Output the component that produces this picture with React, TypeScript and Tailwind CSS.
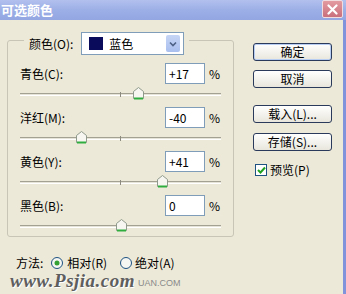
import React from "react";

const FONT = { fontFamily: '"Noto Sans CJK SC", "Noto Sans", sans-serif' };

const sliders = [
  { label: "青色(C):", value: 17 },
  { label: "洋红(M):", value: -40 },
  { label: "黄色(Y):", value: 41 },
  { label: "黑色(B):", value: 0 },
];

function Thumb() {
  return (
    <svg width="11" height="13" viewBox="0 0 11 13">
      <path d="M0.5 4.5 L5.5 0.5 L10.5 4.5 L10.5 11.5 L0.5 11.5 Z" fill="#f7f6f0" stroke="#8f9a8c" />
      <path d="M1 11.5 H10" stroke="#2fae3f" strokeWidth="2" />
    </svg>
  );
}

function SliderBlock({ label, value }: { label: string; value: number }) {
  const sign = value > 0 ? "+" + value : String(value);
  return (
    <div className="flex flex-col h-[44px]">
      <div className="flex items-center h-[21px]">
        <span className="flex-1 text-[12px] text-black">{label}</span>
        <div className="w-[40px] h-[21px] border border-[#7f9db9] bg-white flex items-center pl-[3px] text-[12px] text-black">
          {value === 0 ? "0" : sign}
        </div>
        <span className="ml-[4px] w-[12px] text-[12px] text-black">%</span>
      </div>
      <div className="relative h-[23px]">
        <div className="absolute left-0 right-0 top-[9px] h-[3px] border-t border-[#a3a192] border-b border-b-white bg-[#e6e4d8]" />
        <div className="absolute left-[100px] top-[8px] w-px h-[5px] bg-[#8d8b80]" />
        <div className="absolute top-[3px]" style={{ left: 96 + value }}>
          <Thumb />
        </div>
      </div>
    </div>
  );
}

function XpButton({ children, primary }: { children: React.ReactNode; primary?: boolean }) {
  return (
    <div
      className={
        "w-[79px] h-[18px] rounded-[3px] border border-[#2a3a5a] bg-gradient-to-b from-white to-[#e8e6dc] flex items-center justify-center text-[12px] text-black " +
        (primary ? "shadow-[inset_0_0_0_1px_#b8cdf2]" : "")
      }
    >
      {children}
    </div>
  );
}

function Radio({ on }: { on?: boolean }) {
  return (
    <svg width="12" height="12" viewBox="0 0 12 12">
      <circle cx="6" cy="6" r="5.5" fill="#f6f6f2" stroke="#1d5281" />
      {on && <circle cx="6" cy="6" r="2.5" fill="#33a133" />}
    </svg>
  );
}

export default function App() {
  return (
    <div className="w-[346px] h-[294px] bg-[#ece9d8] flex flex-col overflow-hidden" style={FONT}>
      <div className="h-[20px] flex justify-between bg-gradient-to-b from-[#b2c0ee] via-[#9cafe6] to-[#93a6e2]">
        <span className="pl-[1px] pt-[1px] text-[13px] font-bold text-white leading-[18px]">可选颜色</span>
        <div className="w-[21px] h-[18px] mr-[3px] rounded-[2px] border border-[#f1dde0] bg-gradient-to-b from-[#e39aa0] to-[#c9707c] flex items-center justify-center">
          <svg width="11" height="11" viewBox="0 0 11 11">
            <path d="M1.5 1.5 L9.5 9.5 M9.5 1.5 L1.5 9.5" stroke="white" strokeWidth="2.2" strokeLinecap="round" />
          </svg>
        </div>
      </div>

      <div className="flex-1 flex border-r-[3px] border-[#8193da] relative">
        <div className="w-[234px] pl-[7px] pt-[20px] flex flex-col">
          <div className="w-[227px] h-[197px] border border-[#c8c5b6] rounded-[3px] px-[12px] flex flex-col">
            <div className="-mt-[9px] ml-[4px] self-start px-[5px] bg-[#ece9d8] flex items-center">
              <span className="text-[12px] text-black">颜色(O):</span>
              <div className="ml-[8px] w-[103px] h-[23px] border border-[#7f9db9] bg-white flex items-center pl-[7px] pr-[3px]">
                <div className="w-[14px] h-[13px] bg-[#0b0b5c]" />
                <span className="ml-[6px] flex-1 text-[12px] text-black">蓝色</span>
                <div className="w-[14px] h-[17px] rounded-[2px] bg-gradient-to-b from-[#c6d5f5] to-[#a9bfee] flex items-center justify-center">
                  <svg width="8" height="6" viewBox="0 0 8 6">
                    <path d="M1 1.5 L4 4.5 L7 1.5" fill="none" stroke="#4d6185" strokeWidth="1.6" />
                  </svg>
                </div>
              </div>
            </div>
            <div className="mt-[8px] flex flex-col">
              {sliders.map((s) => (
                <SliderBlock key={s.label} label={s.label} value={s.value} />
              ))}
            </div>
          </div>

          <div className="mt-[19px] ml-[9px] flex items-center h-[14px] text-[12px] leading-[14px] text-black">
            <span>方法:</span>
            <span className="ml-[8px] flex items-center"><Radio on /></span>
            <span className="ml-[4px]">相对(R)</span>
            <span className="ml-[13px] flex items-center"><Radio /></span>
            <span className="ml-[3px]">绝对(A)</span>
          </div>
        </div>

        <div className="pl-[19px] pt-[23px] flex flex-col">
          <XpButton primary>确定</XpButton>
          <div className="mt-[9px]"><XpButton>取消</XpButton></div>
          <div className="mt-[17px]"><XpButton>载入(L)...</XpButton></div>
          <div className="mt-[10px]"><XpButton>存储(S)...</XpButton></div>
          <div className="mt-[10px] ml-[2px] flex items-center">
            <div className="w-[12px] h-[12px] border border-[#1d5281] bg-white flex items-center justify-center">
              <svg width="9" height="8" viewBox="0 0 9 8">
                <path d="M1 4 L3.5 6.5 L8 1.5" fill="none" stroke="#21a121" strokeWidth="2" />
              </svg>
            </div>
            <span className="ml-[3px] text-[12px] text-black">预览(P)</span>
          </div>
        </div>

        <div className="absolute left-[10px] top-[253px] flex items-end pointer-events-none">
          <span
            className="text-[19px] italic font-bold text-[#5e5e5e] tracking-[0.5px] leading-[15px]"
            style={{ fontFamily: '"Liberation Serif", serif', textShadow: "1px 1px 0 #ffffff" }}
          >
            www.Psjia.com
          </span>
          <span className="ml-[3px] text-[9px] text-[#8a8a8a] leading-[10px]" style={{ fontFamily: '"Liberation Sans", sans-serif' }}>
            UAN.COM
          </span>
        </div>
      </div>
    </div>
  );
}
